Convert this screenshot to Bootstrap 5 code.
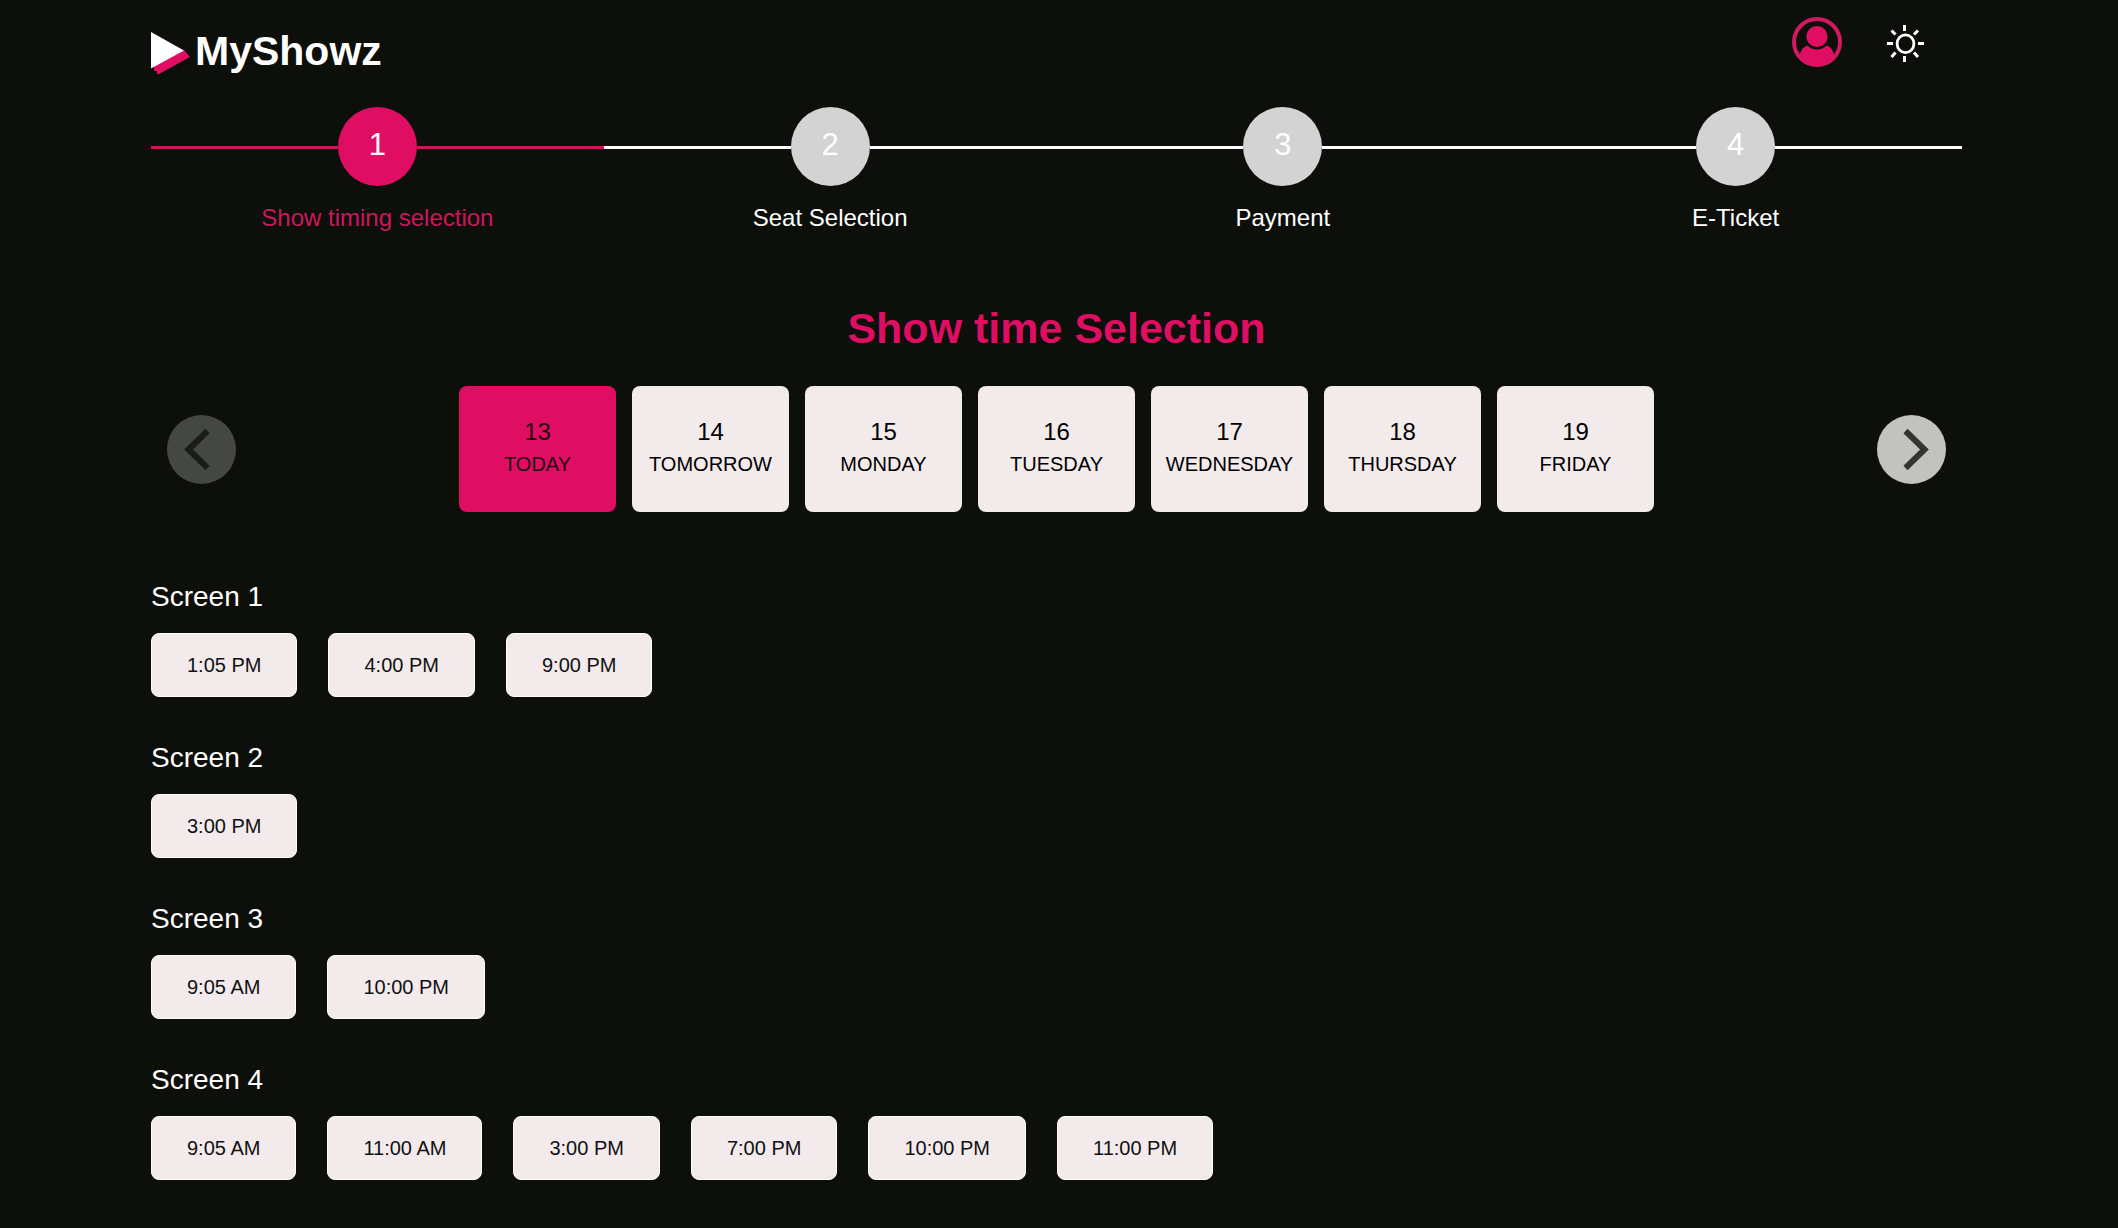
<!DOCTYPE html>
<html lang="en">
<head>
<meta charset="utf-8">
<meta name="viewport" content="width=device-width, initial-scale=1">
<title>MyShowz</title>
<link rel="stylesheet" href="https://cdn.jsdelivr.net/npm/bootstrap@5.3.0/dist/css/bootstrap.min.css">
<style>
  :root { --pink: #df0e62; --pink-line: #cb185c; --night: #0d0f0a; --tile: #f2eaeb; }
  body { background: var(--night); color: #fff; font-family: "Liberation Sans", Arial, sans-serif; }
  .page { padding: 0 156px 48px 151px; }
  .topbar { height: 107px; }
  .brand { font-size: 41px; line-height: 50px; padding-top: 26px; gap: 4px; }
  .tools { padding: 17px 38px 0 0; gap: 45px; }
  .step-dot { width: 79px; height: 79px; background: #d3d3d3; font-size: 31px; line-height: 36px; padding-bottom: 4px; }
  .step-line { height: 3px; margin-top: 2px; background: #fff; }
  .step-name { font-size: 24px; line-height: 36px; margin-top: 14px; }
  .step-now .step-dot { background: var(--pink); }
  .step-now .step-line { background: var(--pink-line); }
  .step-now .step-name { color: var(--pink-line); }
  .heading { font-size: 43px; line-height: 52px; color: var(--pink); margin: 66px 0 32px; }
  .dates { gap: 16px; }
  .date-tile { width: 157px; height: 126px; background: var(--tile); border: 0; border-radius: 8px; color: #000; padding: 0 0 2px; }
  .date-tile.chosen { background: var(--pink); color: #1f0a12; }
  .date-num { font-size: 24px; line-height: 32px; }
  .date-day { font-size: 20px; line-height: 32px; }
  .arrow { width: 69px; height: 69px; border: 0; border-radius: 50%; background: #c2c3c1; color: #333532; }
  .arrow:disabled { background: #454743; color: #1a1c18; }
  .screens { margin-top: 64px; gap: 39px; }
  .screen-name { font-size: 28px; line-height: 42px; margin-bottom: 15px; }
  .screens section { min-height: 122px; }
  .times { gap: 31px; }
  .time-tile { height: 64px; padding: 0 35px; font-size: 20px; line-height: 30px; background: var(--tile); border: 1px solid #fff; border-radius: 8px; color: #111; }
</style>
</head>
<body>
<div class="page container-fluid">
  <header class="topbar d-flex justify-content-between align-items-start">
    <a href="#" class="brand d-flex fw-bold text-white text-decoration-none">
      <svg width="40" height="50" viewBox="151 26 40 50" aria-hidden="true">
        <path d="M154 66v5h3v3h2L190 57l-6-7z" fill="#df0e62"/>
        <path d="M151 32v36.500l33-18z" fill="#fff"/>
      </svg>
      <span>MyShowz</span>
    </a>
    <div class="tools d-flex">
      <button type="button" class="btn p-0 border-0 lh-1" aria-label="Account">
        <svg class="d-block" width="50" height="50" viewBox="0 0 50 50">
          <circle cx="25" cy="25" r="23" fill="none" stroke="#d0195f" stroke-width="4"/>
          <circle cx="25" cy="19.500" r="10.600" fill="#df0e62"/>
          <path d="M7.500 38.500C9 33 11.500 29.500 15.500 28.500Q19.500 32.500 25 32.500T34.500 28.500C38.500 29.500 41 33 42.500 38.500A24 24 0 0 1 25 49A24 24 0 0 1 7.500 38.500z" fill="#df0e62"/>
        </svg>
      </button>
      <button type="button" class="btn p-0 border-0 lh-1" aria-label="Light mode">
        <svg class="d-block" width="37" height="50" viewBox="1887 17 37 50" fill="none" stroke="#fff" stroke-width="3">
          <ellipse cx="1905.500" cy="43.700" rx="8.400" ry="8.900" stroke-width="2.800"/>
          <path d="M1904.500 25v6M1904.500 56v6M1887 43.500h6M1918 43.500h6M1891.500 30.500l4 4M1918 30.500l-4 4M1891.500 57l4-4.500M1918 57l-4-4.500"/>
        </svg>
      </button>
    </div>
  </header>

  <ol class="row g-0 list-unstyled m-0 text-center">
    <li class="col-3 step-now" aria-current="step">
      <div class="d-flex align-items-center"><span class="step-line flex-fill"></span><span class="step-dot rounded-circle d-flex align-items-center justify-content-center">1</span><span class="step-line flex-fill"></span></div>
      <div class="step-name">Show timing selection</div>
    </li>
    <li class="col-3">
      <div class="d-flex align-items-center"><span class="step-line flex-fill"></span><span class="step-dot rounded-circle d-flex align-items-center justify-content-center">2</span><span class="step-line flex-fill"></span></div>
      <div class="step-name">Seat Selection</div>
    </li>
    <li class="col-3">
      <div class="d-flex align-items-center"><span class="step-line flex-fill"></span><span class="step-dot rounded-circle d-flex align-items-center justify-content-center">3</span><span class="step-line flex-fill"></span></div>
      <div class="step-name">Payment</div>
    </li>
    <li class="col-3">
      <div class="d-flex align-items-center"><span class="step-line flex-fill"></span><span class="step-dot rounded-circle d-flex align-items-center justify-content-center">4</span><span class="step-line flex-fill"></span></div>
      <div class="step-name">E-Ticket</div>
    </li>
  </ol>

  <main>
    <h1 class="heading fw-bold text-center">Show time Selection</h1>

    <div class="d-flex justify-content-between align-items-center px-3">
      <button type="button" class="arrow p-0" aria-label="Earlier dates" disabled>
        <svg class="d-block" width="69" height="69" viewBox="0 0 69 69" fill="none" stroke="currentColor" stroke-width="6"><path d="M40.500 16L21.500 34.500 40.500 53"/></svg>
      </button>
      <div class="dates d-flex">
        <button type="button" class="date-tile chosen"><span class="date-num d-block">13</span><span class="date-day d-block">TODAY</span></button>
        <button type="button" class="date-tile"><span class="date-num d-block">14</span><span class="date-day d-block">TOMORROW</span></button>
        <button type="button" class="date-tile"><span class="date-num d-block">15</span><span class="date-day d-block">MONDAY</span></button>
        <button type="button" class="date-tile"><span class="date-num d-block">16</span><span class="date-day d-block">TUESDAY</span></button>
        <button type="button" class="date-tile"><span class="date-num d-block">17</span><span class="date-day d-block">WEDNESDAY</span></button>
        <button type="button" class="date-tile"><span class="date-num d-block">18</span><span class="date-day d-block">THURSDAY</span></button>
        <button type="button" class="date-tile"><span class="date-num d-block">19</span><span class="date-day d-block">FRIDAY</span></button>
      </div>
      <button type="button" class="arrow p-0" aria-label="Later dates">
        <svg class="d-block" width="69" height="69" viewBox="0 0 69 69" fill="none" stroke="currentColor" stroke-width="6"><path d="M28.500 16L47.500 34.500 28.500 53"/></svg>
      </button>
    </div>

    <div class="screens d-flex flex-column">
      <section>
        <h2 class="screen-name fw-normal">Screen 1</h2>
        <div class="times d-flex flex-wrap">
          <button type="button" class="time-tile">1:05 PM</button>
          <button type="button" class="time-tile">4:00 PM</button>
          <button type="button" class="time-tile">9:00 PM</button>
        </div>
      </section>
      <section>
        <h2 class="screen-name fw-normal">Screen 2</h2>
        <div class="times d-flex flex-wrap">
          <button type="button" class="time-tile">3:00 PM</button>
        </div>
      </section>
      <section>
        <h2 class="screen-name fw-normal">Screen 3</h2>
        <div class="times d-flex flex-wrap">
          <button type="button" class="time-tile">9:05 AM</button>
          <button type="button" class="time-tile">10:00 PM</button>
        </div>
      </section>
      <section>
        <h2 class="screen-name fw-normal">Screen 4</h2>
        <div class="times d-flex flex-wrap">
          <button type="button" class="time-tile">9:05 AM</button>
          <button type="button" class="time-tile">11:00 AM</button>
          <button type="button" class="time-tile">3:00 PM</button>
          <button type="button" class="time-tile">7:00 PM</button>
          <button type="button" class="time-tile">10:00 PM</button>
          <button type="button" class="time-tile">11:00 PM</button>
        </div>
      </section>
    </div>
  </main>
</div>
<script src="https://cdn.jsdelivr.net/npm/bootstrap@5.3.0/dist/js/bootstrap.bundle.min.js"></script>
</body>
</html>
